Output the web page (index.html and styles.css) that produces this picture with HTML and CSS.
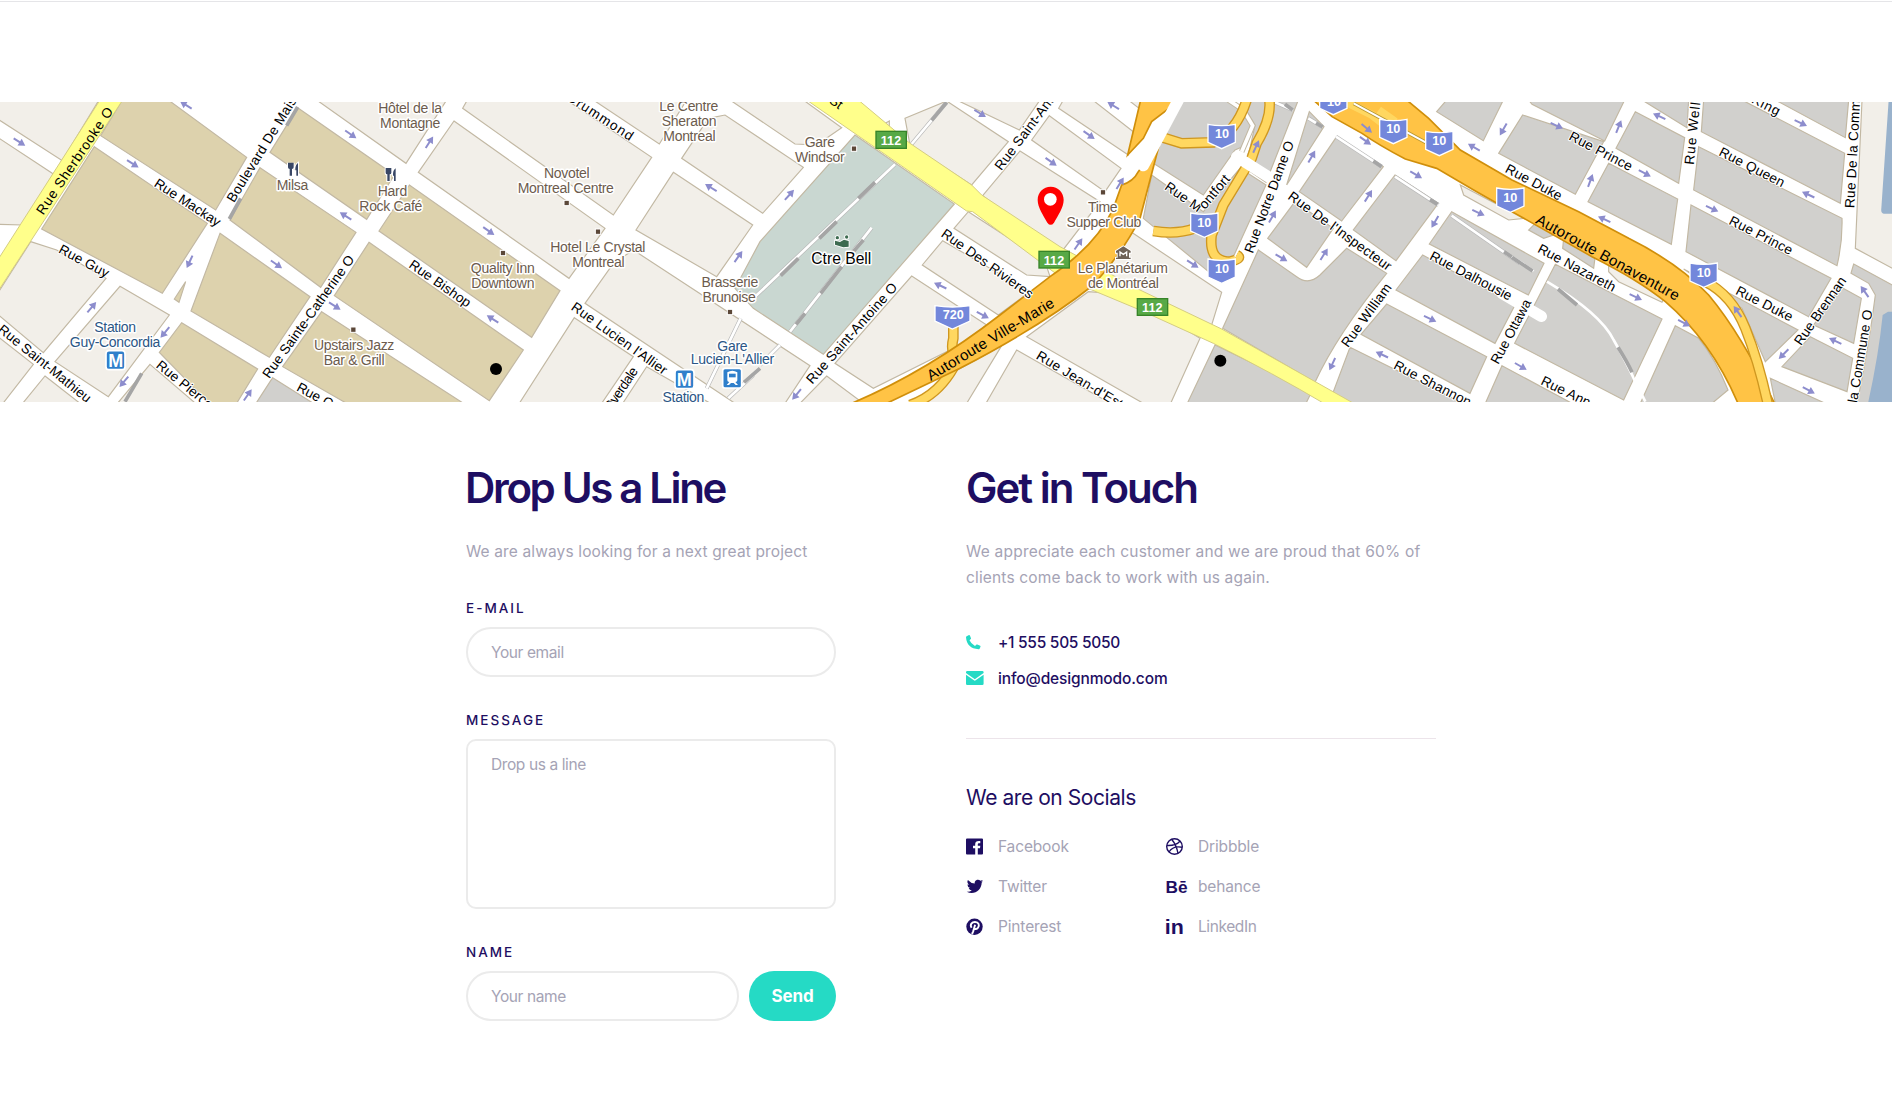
FILE: index.html
```html
<!DOCTYPE html>
<html lang="en">
<head>
<meta charset="utf-8">
<title>Contact</title>
<link rel="stylesheet" href="styles.css">
</head>
<body>
<section class="contact">
<div class="map">
<svg class="map-art" viewBox="0 21 5676 900" role="img" aria-label="Map of downtown Montreal">
<defs>
<path id="ar" class="arrow" d="M-20-3H1V-12L21 0L1 12V3H-20Z"/>
<rect id="dot" class="dot" x="-8" y="-8" width="16" height="16"/>
<path id="sh" class="shield" d="M-41-30Q0-22 41-30V24L0 43L-41 24Z"/>
</defs>
<rect class="road" y="21" width="5676" height="900"/>
<!-- city blocks, west to east -->
<g class="light">
<path d="M-10 0V70L187 197L300 10ZM-10 125L160 237L68 390L-10 388ZM92 440L170 465L318 550L130 773L-10 655V600ZM360 574L508 660L325 905L165 800ZM-10 722L100 808L5 930H-10ZM135 843L240 925H68ZM450 808L590 928H350ZM950 15L1218 205L1340 15Z"/>
</g>
<g class="tan">
<path d="M302 122L367 15H505L740 187L647 345ZM283 155L622 385L487 595L125 402ZM557 560L523 612L537 622ZM893 38L1183 240L1100 373L810 172ZM780 218L1068 412L962 577L690 375ZM1107 442L1570 765L1468 917L1003 602ZM660 415L930 605L808 787L573 648ZM965 650L1395 928H1045L848 815ZM545 683L773 822L708 928H630L478 772ZM1228 270L1680 587L1595 727L1137 408Z"/>
</g>
<g class="gray"><path d="M818 848L940 925H768Z"/></g>
<path class="sleeper" d="M893 36L860 92M722 310L688 372M425 835L375 920"/>
<g transform="translate(1140)" class="light">
<path d="M248 40L262 15H560L815 187L700 360ZM222 78L675 400L567 550L115 232ZM640 15L838 147L920 15ZM905 190L985 70L1035 60L1270 217L1148 355ZM880 232L1118 390L1010 545L768 405ZM700 505L760 465L1290 812L1215 925H1065L615 625ZM583 668L760 785L665 925H418ZM800 815L1000 930H725Z"/>
</g>
<g transform="translate(2280)">
<g class="light">
<path d="M-90 15L105 147L170 150L245 98L130 15ZM435 70L560 18L745 140L635 270L450 150ZM388 78V97L350 99ZM590 15L778 105L840 15ZM868 62L1083 220L1035 290L815 135ZM896 40L910 15H998L1120 110L1105 180ZM1105 15L1150 50V15ZM780 168L1020 320L905 470L850 440L668 302ZM625 350L855 500L870 545L800 540L582 400ZM548 437L810 590L715 660L487 510ZM455 543L680 690L600 750L340 880L225 805ZM200 843L310 925H120ZM800 725L985 590L1110 600L1320 730L1232 925H1150ZM770 765L1060 930H675ZM725 752L620 925H490L575 835ZM1090 395L1385 592L1355 690L1040 560Z"/>
</g>
<g class="park"><path d="M285 120L583 327L190 778L-20 640L-75 580L0 440Z"/></g>
<path class="track-edge" d="M560 22L455 147M405 208L-20 610M335 398L90 710M60 750L0 810M-58 670L-160 880M-20 840L-95 910"/>
<path class="track" d="M560 22L455 147M405 208L-20 610M335 398L90 710M60 750L0 810M-58 670L-160 880M-20 840L-95 910"/>
<path class="sleeper" d="M560 22L515 76M345 262L295 310M230 380L178 430M115 490L62 542M310 435L280 470M245 515L182 595M135 655L108 688M0 820L-48 862"/>
</g>
<g transform="translate(3420)">
<g class="gray">
<path d="M120 15H270L335 90L320 150L285 165L190 300L40 205L62 120ZM300 15H475L378 262L310 215L330 160L345 90ZM300 220L378 270L245 562L10 370L35 240L190 350ZM508 50L552 95L440 270ZM590 125L730 215L605 378L478 290ZM465 320L580 400L500 517L383 430ZM765 240L895 325L768 497L640 405ZM355 465L470 545Q505 572 540 540L620 460L740 535Q590 720 525 862L248 700ZM225 750L515 890L498 925H142ZM935 350L1212 505L1165 600L868 447ZM848 480L1125 630L1065 745L768 585ZM740 627L1040 785L990 895L663 718ZM630 757L970 925H567ZM920 15H1090L1030 137L890 50Z"/>
</g>
<path class="lane-edge" d="M265 15L310 45L338 92L305 170"/>
<path class="lane" d="M265 15L310 45L338 92L305 170"/>
<path class="track-edge" d="M405 22L458 45M505 70L548 96M588 125L725 215M765 245L895 330M935 362L1140 505"/>
<path class="track" d="M405 22L458 45M505 70L548 96M588 125L725 215M765 245L895 330M935 362L1140 505"/>
<path class="sleeper" d="M435 28L458 45M528 84L548 96M700 198L725 215M870 314L893 328M1092 470L1140 503"/>
</g>
<g transform="translate(4536)">
<g class="gray">
<path d="M32 60L275 140L190 298L-40 175ZM50 15H338L278 138L60 28ZM370 50L518 128L500 265L312 160ZM390 15H530L525 98ZM290 205L497 312L478 448L228 320ZM575 15H690L998 175L985 325L568 110ZM790 15H1010L1000 128ZM560 155L990 370Q992 440 975 512L545 285ZM537 330L957 550L890 665L522 470ZM515 522L858 705L760 800L690 640ZM985 575L1048 610L1025 745L905 690ZM895 725L1022 790L1005 890L810 815ZM775 850L940 925H790ZM1025 507L1150 575V925H1035Q1070 760 1090 600L1070 565L1017 535ZM130 508L450 672L335 915L8 745ZM-30 812L180 925H-80ZM490 692L560 730Q610 790 648 885L600 925H385ZM75 380L50 405L95 430L125 420ZM155 430L250 480L245 520L152 460Z"/>
</g>
<g class="light"><path d="M1050 15H1150V525L1030 460ZM290 510L460 600L450 622L320 560L290 530ZM-155 270L-60 320L40 370L-10 375L-145 300Z"/></g>
<g class="water"><path d="M1130 15H1150V356H1115Q1106 354 1108 340ZM1128 650H1150V925H1068Q1100 780 1112 660Z"/></g>
<path class="street" d="M-30 595L88 664"/>
<path class="track" d="M0 485L65 528M105 560Q265 655 305 735Q345 805 365 850L400 920"/>
<path class="sleeper" d="M0 487L62 528M138 582L195 630M318 757Q345 800 360 832"/>
</g>
<!-- arterial roads -->
<path class="yellow" d="M300 15L-10 500V595L368 15Z"/>
<path class="yellow" transform="translate(2280)" d="M140 15H295L450 145L635 270L665 300L900 455L1140 585L1385 702L1790 930H1700Q1540 835 1360 745L1140 645L900 545L638 350L620 348Z"/>
<g transform="translate(3420)">
<path class="ramp-edge" d="M50 122L125 145L220 142Q290 110 320 15M388 15Q395 70 350 145L335 190L250 330L215 420Q205 500 270 500Q310 490 290 480M40 408Q110 420 165 400"/>
<path class="ramp" d="M50 122L125 145L220 142Q290 110 320 15M388 15Q395 70 350 145L335 190L250 330L215 420Q205 500 270 500Q310 490 290 480M40 408Q110 420 165 400"/>
<path class="street" d="M290 185L385 245"/>
</g>
<g transform="translate(2280)">
<path class="ramp-edge" d="M580 690V730Q570 770 590 790M590 800Q540 900 450 930"/>
<path class="ramp" d="M580 690V730Q570 770 590 790M590 800Q540 900 450 930"/>
<path class="orange" d="M275 925Q500 830 720 660L870 545Q1010 450 1060 340L1085 270Q1120 260 1135 230L1200 140L1140 370Q1090 470 1000 570Q850 690 600 820L380 925ZM1103 180L1142 15H1260L1175 80L1150 130Z"/>
<path class="street" d="M1150 212L1255 15"/>
</g>
<g transform="translate(4536)">
<path class="orange" d="M-596 15H-316L-250 70L-155 165L0 255L200 350L350 430Q500 505 590 600Q690 720 790 930H680Q600 740 460 620Q380 555 240 485L0 350L-106 290L-226 220L-320 192Q-400 150 -450 115L-540 65Z"/>
<path class="ramp-edge" d="M580 560Q660 600 700 700Q740 800 768 930"/>
<path class="ramp" d="M580 560Q660 600 700 700Q740 800 768 930M-500 20L-420 60L-350 115M-400 45L-350 80"/>
<path class="rail-edge" d="M-475 25L-230 158"/>
<path class="rail" d="M-475 25L-230 158"/>
</g>
<!-- one-way arrows -->
<g>
<use href="#ar" transform="translate(58 141) rotate(32)"/><use href="#ar" transform="translate(398 206) rotate(32)"/><use href="#ar" transform="translate(558 30) rotate(212)"/><use href="#ar" transform="translate(1052 118) rotate(35)"/><use href="#ar" transform="translate(1037 363) rotate(212)"/><use href="#ar" transform="translate(829 508) rotate(35)"/><use href="#ar" transform="translate(569 500) rotate(115)"/><use href="#ar" transform="translate(275 637) rotate(-50)"/><use href="#ar" transform="translate(495 712) rotate(130)"/><use href="#ar" transform="translate(372 860) rotate(130)"/><use href="#ar" transform="translate(1004 633) rotate(32)"/><use href="#ar" transform="translate(743 900) rotate(-55)"/>
</g>
<g transform="translate(1140)">
<use href="#ar" transform="translate(148 142) rotate(-57)"/><use href="#ar" transform="translate(326 408) rotate(35)"/><use href="#ar" transform="translate(338 672) rotate(212)"/><use href="#ar" transform="translate(993 278) rotate(212)"/><use href="#ar" transform="translate(1075 485) rotate(-55)"/>
</g>
<g transform="translate(2280)">
<use href="#ar" transform="translate(88 300) rotate(-48)"/><use href="#ar" transform="translate(660 55) rotate(32)"/><use href="#ar" transform="translate(987 120) rotate(35)"/><use href="#ar" transform="translate(873 200) rotate(35)"/><use href="#ar" transform="translate(1060 32) rotate(212)"/><use href="#ar" transform="translate(1080 265) rotate(-58)"/><use href="#ar" transform="translate(955 447) rotate(-55)"/><use href="#ar" transform="translate(541 572) rotate(205)"/><use href="#ar" transform="translate(668 660) rotate(28)"/><use href="#ar" transform="translate(110 898) rotate(130)"/>
</g>
<g transform="translate(3420)">
<use href="#ar" transform="translate(348 155) rotate(-65)"/><use href="#ar" transform="translate(515 185) rotate(-60)"/><use href="#ar" transform="translate(397 365) rotate(-60)"/><use href="#ar" transform="translate(424 488) rotate(30)"/><use href="#ar" transform="translate(552 478) rotate(-58)"/><use href="#ar" transform="translate(158 507) rotate(33)"/><use href="#ar" transform="translate(685 303) rotate(-58)"/><use href="#ar" transform="translate(676 137) rotate(35)"/><use href="#ar" transform="translate(680 100) rotate(40)"/><use href="#ar" transform="translate(828 239) rotate(30)"/><use href="#ar" transform="translate(885 380) rotate(120)"/><use href="#ar" transform="translate(870 671) rotate(25)"/><use href="#ar" transform="translate(726 779) rotate(205)"/><use href="#ar" transform="translate(577 807) rotate(115)"/><use href="#ar" transform="translate(1002 157) rotate(210)"/><use href="#ar" transform="translate(1090 103) rotate(120)"/><use href="#ar" transform="translate(1015 353) rotate(25)"/>
</g>
<g transform="translate(4536)">
<use href="#ar" transform="translate(134 92) rotate(25)"/><use href="#ar" transform="translate(320 95) rotate(-68)"/><use href="#ar" transform="translate(235 257) rotate(-70)"/><use href="#ar" transform="translate(398 235) rotate(28)"/><use href="#ar" transform="translate(442 64) rotate(205)"/><use href="#ar" transform="translate(866 84) rotate(25)"/><use href="#ar" transform="translate(600 341) rotate(25)"/><use href="#ar" transform="translate(889 299) rotate(205)"/><use href="#ar" transform="translate(277 373) rotate(205)"/><use href="#ar" transform="translate(371 606) rotate(25)"/><use href="#ar" transform="translate(516 684) rotate(28)"/><use href="#ar" transform="translate(26 814) rotate(30)"/><use href="#ar" transform="translate(677 650) rotate(235)"/><use href="#ar" transform="translate(815 777) rotate(135)"/><use href="#ar" transform="translate(890 886) rotate(28)"/><use href="#ar" transform="translate(970 738) rotate(205)"/><use href="#ar" transform="translate(1058 590) rotate(235)"/>
</g>
<!-- street names -->
<g class="name">
<text class="plain" transform="translate(130 362) rotate(-56)" textLength="378">Rue Sherbrooke O</text>
<text transform="translate(460 272) rotate(33)" textLength="228">Rue Mackay</text>
<text transform="translate(702 325) rotate(-58.5)" textLength="362">Boulevard De Mais</text>
<text transform="translate(173 472) rotate(28)" textLength="164">Rue Guy</text>
<text transform="translate(-8 708) rotate(39)" textLength="345">Rue Saint-Mathieu</text>
<text transform="translate(466 815) rotate(39)" textLength="205">Rue Pierce</text>
<text transform="translate(808 853) rotate(-54.5)" textLength="442">Rue Sainte-Catherine O</text>
<text transform="translate(887 886) rotate(28)">Rue Crescent</text>
</g>
<g class="name" transform="translate(1140)">
<text transform="translate(558 14) rotate(33)" textLength="228">Drummond</text>
<text transform="translate(84 515) rotate(35)" textLength="216">Rue Bishop</text>
<text transform="translate(571 642) rotate(35.5)" textLength="342">Rue Lucien l'Allier</text>
<text transform="translate(692 952) rotate(-56)" textLength="150">Overdale</text>
</g>
<g class="name" transform="translate(2280)">
<text class="plain" transform="translate(205 22) rotate(35)">St</text>
<text transform="translate(724 229) rotate(-53)" textLength="345">Rue Saint-Antoine</text>
<text transform="translate(541 422) rotate(35.5)" textLength="328">Rue Des Rivieres</text>
<text transform="translate(157 869) rotate(-48.5)" textLength="388">Rue Saint-Antoine O</text>
<text class="big" transform="translate(512 858) rotate(-31)" textLength="437">Autoroute Ville-Marie</text>
<text transform="translate(826 790) rotate(31)" textLength="295">Rue Jean-d'Est</text>
</g>
<g class="name" transform="translate(3420)">
<text transform="translate(71 281) rotate(35)" textLength="125">Rue M</text>
<text transform="translate(195 345) rotate(-50)" textLength="120">ontfort</text>
<text transform="translate(338 477) rotate(-69.5)" textLength="355">Rue Notre Dame O</text>
<text transform="translate(441 310) rotate(36)" textLength="372">Rue De l'Inspecteur</text>
<text transform="translate(624 760) rotate(-54)" textLength="225">Rue William</text>
<text transform="translate(866 492) rotate(27.5)" textLength="272">Rue Dalhousie</text>
<text transform="translate(758 820) rotate(27)" textLength="255">Rue Shannon</text>
<text transform="translate(1075 810) rotate(-62)" textLength="213">Rue Ottawa</text>
</g>
<g class="name" transform="translate(4536)">
<text transform="translate(168 133) rotate(27.5)" textLength="208">Rue Prince</text>
<text class="plain" transform="translate(-23 230) rotate(28)" textLength="186">Rue Duke</text>
<text class="big" transform="translate(68 383) rotate(29)" textLength="485">Autoroute Bonaventure</text>
<text transform="translate(74 470) rotate(28)" textLength="258">Rue Nazareth</text>
<text transform="translate(84 867) rotate(26)" textLength="160">Rue Ann</text>
<text transform="translate(545 210) rotate(-84)" textLength="200">Rue Welli</text>
<text transform="translate(716 22) rotate(27)" textLength="90">King</text>
<text transform="translate(618 180) rotate(27)" textLength="215">Rue Queen</text>
<text transform="translate(1027 340) rotate(-87)" textLength="325">Rue De la Comm</text>
<text transform="translate(648 386) rotate(27)" textLength="208">Rue Prince</text>
<text transform="translate(668 596) rotate(27)" textLength="186">Rue Duke</text>
<text transform="translate(867 754) rotate(-55)" textLength="240">Rue Brennan</text>
<text transform="translate(1035 925) rotate(-80.5)" textLength="282">la Commune O</text>
</g>
<!-- places -->
<g class="poi">
<text x="877" y="286">Milsa</text>
<text x="1230" y="53">Hôtel de la</text><text x="1230" y="98">Montagne</text>
<text x="1177" y="302">Hard</text><text x="1172" y="347">Rock Café</text>
<text x="1062" y="766">Upstairs Jazz</text><text x="1062" y="811">Bar &amp; Grill</text>
<text x="1700" y="250">Novotel</text><text x="1697" y="295">Montreal Centre</text>
<text x="1793" y="470">Hotel Le Crystal</text><text x="1795" y="515">Montreal</text>
<text x="1508" y="535">Quality Inn</text><text x="1508" y="580">Downtown</text>
<text x="2066" y="48">Le Centre</text><text x="2067" y="94">Sheraton</text><text x="2068" y="139">Montreal</text>
<text x="2189" y="576">Brasserie</text><text x="2187" y="621">Brunoise</text>
<text x="2459" y="155">Gare</text><text x="2459" y="200">Windsor</text>
<text x="3308" y="350">Time</text><text x="3311" y="396">Supper Club</text>
<text x="3368" y="535">Le Planétarium</text><text x="3370" y="580">de Montréal</text>
</g>
<g class="poi station">
<text x="345" y="710">Station</text><text x="345" y="755">Guy-Concordia</text>
<text x="2197" y="767">Gare</text><text x="2197" y="808">Lucien-L'Allier</text><text x="2050" y="921">Station</text>
</g>
<text class="venue" x="2524" y="507">Ctre Bell</text>
<use href="#dot" x="1060" y="704"/><use href="#dot" x="1700" y="324"/><use href="#dot" x="1794" y="410"/><use href="#dot" x="1509" y="474"/><use href="#dot" x="2190" y="651"/><use href="#dot" x="2562" y="161"/><use href="#dot" x="3309" y="292"/>
<g class="fork"><path d="M864 203V217Q864 222 869 222V242H876V222Q881 222 881 217V203M871 203V220M894 204Q885 210 886 226H889V242H894Z"/><path transform="translate(293 16)" d="M864 203V217Q864 222 869 222V242H876V222Q881 222 881 217V203M871 203V220M894 204Q885 210 886 226H889V242H894Z"/></g>
<g class="metro"><rect x="318" y="767" width="57" height="57" rx="9"/><text x="347" y="815">M</text><rect x="2025" y="824" width="57" height="57" rx="9"/><text x="2053" y="872">M</text></g>
<g class="train"><rect x="2168" y="820" width="57" height="59" rx="7"/><path d="M2182 832Q2197 822 2212 832V856Q2212 861 2206 861L2214 870H2207L2201 864H2193L2187 870H2180L2188 861Q2182 861 2182 856Z"/><path class="pane" d="M2187 836H2207V847H2187Z"/></g>
<g class="arena"><circle cx="2512" cy="428" r="5"/><circle cx="2540" cy="426" r="5"/><path d="M2505 437L2520 441L2532 434L2546 438V455L2530 457L2505 449Z"/></g>
<path class="museum" d="M3348 468L3370 454L3392 468V473H3387V488H3392V492H3348V488H3353V473H3348Z"/><path class="museum-hall" d="M3360 484V471L3370 478L3380 471V484"/>
<!-- route shields -->
<g class="route">
<rect x="2628" y="109" width="91" height="51"/><text x="2673" y="150">112</text>
<rect x="3117" y="469" width="91" height="50"/><text x="3162" y="509">112</text>
<rect x="3412" y="611" width="91" height="50"/><text x="3457" y="651">112</text>
</g>
<g class="hwy">
<path class="shield" d="M2805 632Q2857 640 2910 632V678L2857 702L2805 678Z"/><text x="2860" y="673">720</text>
<use href="#sh" x="3665" y="118"/><text x="3666" y="130">10</text>
<use href="#sh" x="3613" y="384"/><text x="3613" y="396">10</text>
<use href="#sh" x="3665" y="522"/><text x="3666" y="534">10</text>
<use href="#sh" x="4000" y="16"/><text x="4002" y="32">10</text>
<use href="#sh" x="4180" y="103"/><text x="4180" y="115">10</text>
<use href="#sh" x="4318" y="139"/><text x="4318" y="151">10</text>
<use href="#sh" x="4531" y="309"/><text x="4531" y="321">10</text>
<use href="#sh" x="5111" y="534"/><text x="5111" y="546">10</text>
</g>
<circle cx="1488" cy="822" r="18"/><circle cx="3661" cy="797" r="18"/>
<path class="pin" d="M3152 275C3130 275 3113 292 3113 315C3113 337 3130 362 3142 383Q3152 396 3162 383C3174 362 3191 337 3191 315C3191 292 3174 275 3152 275Z"/><circle class="pin-hole" cx="3151" cy="313" r="19"/>
</svg>
</div>
<div class="columns">
<form class="form">
<h2>Drop Us a Line</h2>
<p class="lead">We are always looking for a next great project</p>
<label for="email">E-MAIL</label>
<input id="email" type="email" placeholder="Your email">
<label for="message">MESSAGE</label>
<textarea id="message" placeholder="Drop us a line"></textarea>
<label for="name">NAME</label>
<div class="send-row"><input id="name" type="text" placeholder="Your name"><button type="button">Send</button></div>
</form>
<div class="touch">
<h2>Get in Touch</h2>
<p class="lead about">We appreciate each customer and we are proud that 60% of<br><span>clients come back to work with us again.</span></p>
<div class="direct"><svg width="15" height="15" viewBox="0 0 15 15"><path d="M.6 1.2L3 .1Q3.6 0 3.9.6L5 3.2Q5.1 3.7 4.8 4L3.5 5.2Q5 8.6 9 11L10.500 9.600Q10.900 9.300 11.300 9.500L14.200 10.800Q14.700 11.200 14.500 11.700L13.600 13.700Q13.200 14.200 12.500 14.200Q.8 13.300 0 2.200Q0 1.500.6 1.200Z"/></svg><span class="tel">+1 555 505 5050</span></div>
<div class="direct"><svg width="18" height="14" viewBox="0 0 18 14"><path d="M1.300 0H16.300Q17.600 0 17.600 1.300V2.100L8.800 8.300L0 2.100V1.300Q0 0 1.300 0ZM0 3.700L8.300 9.500Q8.800 9.800 9.300 9.500L17.600 3.700V12.700Q17.600 14 16.300 14H1.300Q0 14 0 12.700Z"/></svg><span class="mail">info@designmodo.com</span></div>
<hr>
<h3>We are on Socials</h3>
<div class="social">
<a><svg viewBox="0 0 17 17"><path fill-rule="evenodd" d="M1 .5H16Q17 .5 17 1.500V15.500Q17 16.500 16 16.500H11.800V10.300H14L14.300 7.800H11.800V6.200Q11.800 5.300 12.800 5.300H14.300V3Q9.200 2.300 9.200 6V7.800H7V10.300H9.200V16.500H1Q0 16.500 0 15.500V1.500Q0 .5 1 .5Z"/></svg><span>Facebook</span></a>
<a><svg viewBox="0 0 17 17"><g class="ball"><circle cx="8.500" cy="8.500" r="7.800"/><path d="M5.600 1.300Q10.500 7 12 15.500M14.100 3Q10 8 .8 7.500M3 14Q7 7.300 16.200 9.300"/></g></svg><span>Dribbble</span></a>
<a><svg viewBox="0 0 17 17"><path d="M17.200 3.500Q16.400 4.100 15.700 4.500C15.700 12 8 17.800.7 13.700Q3.800 13.900 5.800 12.400Q3.500 12 2.700 9.900H4.100Q1.400 9 1.400 6.400L2.900 6.800Q.5 4.700 1.900 2.100Q4.700 5.400 8.800 5.600C8 2.200 12.200.3 14.500 2.800L16.700 1.900Q16.300 3.100 15.300 3.900Z"/></svg><span>Twitter</span></a>
<a><svg class="wide" viewBox="0 0 22 17"><text x="-.5" y="15" textLength="22" lengthAdjust="spacingAndGlyphs">Bē</text></svg><span>behance</span></a>
<a><svg viewBox="0 0 17 17"><circle cx="8.500" cy="8.700" r="8.200"/><path class="pin-mark" d="M5.600 9.800C3.500 6.400 6 4 9 4C12.800 4 13.700 7.300 12 9.800C10.900 11.400 9 11.300 8.100 10M9.100 6.800L7.200 13.300L6 16"/></svg><span>Pinterest</span></a>
<a><svg viewBox="0 0 17 17"><text class="in" x="-1.200" y="15.700" textLength="19" lengthAdjust="spacingAndGlyphs">in</text></svg><span class="tight">LinkedIn</span></a>
</div>
</div>
</div>
</section>
</body>
</html>
```
FILE: styles.css
```css
* { box-sizing: border-box; }
body { margin: 0; background: #fff; font-family: Inter, "Open Sans", sans-serif; color: #1e0e62; }
.contact { height: 1094px; margin-top: 1px; overflow: hidden; border-top: 1px solid #e5e5e8; padding-top: 100px; }
.map { height: 300px; overflow: hidden; }
.map-art { display: block; width: 1892px; height: 300px; font-family: "Liberation Sans", sans-serif; }
.road { fill: #fff; }
.light, .tan, .gray, .park { stroke: #c2b8a3; stroke-width: 3.5; }
.light { fill: #f2efe9; }
.tan { fill: #ddd2ad; }
.gray { fill: #d1d0cd; }
.park { fill: #c9d7d1; }
.water { fill: #99b2cc; }
.street { fill: none; stroke: #fff; stroke-width: 34; stroke-linecap: round; }
.lane-edge { fill: none; stroke: #c2b8a3; stroke-width: 17; }
.lane { fill: none; stroke: #fff; stroke-width: 11; }
.track-edge { fill: none; stroke: #b9b9b9; stroke-width: 12; }
.track { fill: none; stroke: #fff; stroke-width: 8; }
.sleeper { fill: none; stroke: #a5a5a5; stroke-width: 11; }
.rail-edge { fill: none; stroke: #b8962f; stroke-width: 11; }
.rail { fill: none; stroke: #fff; stroke-width: 6; }
.yellow { fill: #ffff8b; stroke: #d5cd82; stroke-width: 3; }
.orange { fill: #ffc345; stroke: #d08f0b; stroke-width: 5; }
.ramp-edge { fill: none; stroke: #cf9720; stroke-width: 32; }
.ramp { fill: none; stroke: #ffd760; stroke-width: 24; }
.arrow { fill: #8d8dcd; }
.name { font-size: 41px; fill: #000; stroke: #fff; stroke-width: 6px; stroke-linejoin: round; paint-order: stroke; }
.name .big { font-size: 45px; stroke: none; }
.name .plain { stroke: none; }
.poi { font-size: 42px; fill: #6c5b4d; text-anchor: middle; stroke: #fff; stroke-width: 9px; stroke-linejoin: round; paint-order: stroke; letter-spacing: -.9px; }
.station { fill: #2b5685; }
.venue { font-size: 47px; fill: #000; text-anchor: middle; stroke: #fff; stroke-width: 9px; stroke-linejoin: round; paint-order: stroke; }
.dot { fill: #5b4738; stroke: #fff; stroke-width: 3; }
.fork { fill: #394765; stroke: #fff; stroke-width: 6; paint-order: stroke; }
.metro rect, .train rect { fill: #2f7fcb; stroke: #fff; stroke-width: 5; }
.metro text { fill: #fff; font-size: 54px; font-weight: 700; text-anchor: middle; }
.train path { fill: #fff; }
.train .pane { fill: #2f7fcb; }
.arena { fill: #3d6b50; stroke: #fff; stroke-width: 5; paint-order: stroke; }
.museum { fill: #6e6257; stroke: #fff; stroke-width: 6; paint-order: stroke; }
.museum-hall { fill: none; stroke: #fff; stroke-width: 4; }
.route rect { fill: #57a946; stroke: #378429; stroke-width: 4; }
.route text, .hwy text { fill: #fff; font-size: 38px; font-weight: 700; text-anchor: middle; }
.shield { fill: #7387db; stroke: #fff; stroke-width: 4; }
.pin { fill: #f00; }
.pin-hole { fill: #fff; }

.columns { display: flex; gap: 130px; padding: 61px 0 0 466px; }
.form { width: 370px; }
.touch { width: 470px; }
h2 { margin: 0; height: 50px; line-height: 50px; font-size: 42px; font-weight: 600; letter-spacing: -2px; white-space: nowrap; }
.form h2 { letter-spacing: -2.35px; margin-left: -1px; }
.lead { margin: 26px 0 0; line-height: 26px; font-size: 15.5px; color: #a5a3b5; white-space: nowrap; letter-spacing: .13px; }
.about { margin-bottom: 38px; letter-spacing: .22px; }
.about span { letter-spacing: .16px; }
label { display: block; height: 20px; line-height: 20px; margin: 33px 0 9px; font-size: 13.5px; font-weight: 500; letter-spacing: 2px; }
input, textarea { display: block; width: 100%; height: 50px; margin: 0; padding: 0 23px; border: 2px solid #ebebeb; border-radius: 25px; background: #fff; font: 400 15.5px/26px Inter, sans-serif; letter-spacing: -.4px; resize: none; outline: none; }
textarea { height: 170px; border-radius: 10px; padding: 11px 23px; }
::placeholder { color: #a5a3b5; opacity: 1; }
.send-row { display: flex; gap: 10px; }
.send-row input { width: 273px; }
button { width: 87px; height: 50px; padding: 0; border: 0; border-radius: 25px; background: #25dac5; color: #fff; font: 700 17px/26px Inter, sans-serif; letter-spacing: -.1px; }
.direct { display: grid; grid-template-columns: 32px 1fr; align-items: center; height: 26px; margin-bottom: 10px; font-size: 15.5px; font-weight: 500; }
.direct svg { fill: #25dac5; }
.tel { letter-spacing: -.28px; }
.mail { letter-spacing: -.13px; }
hr { height: 1px; margin: 47px 0 43px; border: 0; background: #ece4ea; }
h3 { margin: 0 0 19px; height: 32px; line-height: 32px; font-size: 21px; font-weight: 400; letter-spacing: -.44px; }
.social { display: grid; grid-template-columns: 200px 200px; grid-auto-rows: 26px; row-gap: 14px; font-size: 15.5px; letter-spacing: -.15px; color: #a5a3b5; }
.social a { display: grid; grid-template-columns: 32px 1fr; align-items: center; }
.tight { letter-spacing: -.4px; }
.social svg { width: 17px; height: 17px; fill: #1e0e62; overflow: visible; }
.social .wide { width: 22px; }
.social text { font: 700 17px "Liberation Sans", sans-serif; letter-spacing: 0; }
.social .in { font-size: 21px; }
.ball { fill: none; stroke: #1e0e62; stroke-width: 1.4; }
.pin-mark { fill: none; stroke: #fff; stroke-width: 1.9; }
```
